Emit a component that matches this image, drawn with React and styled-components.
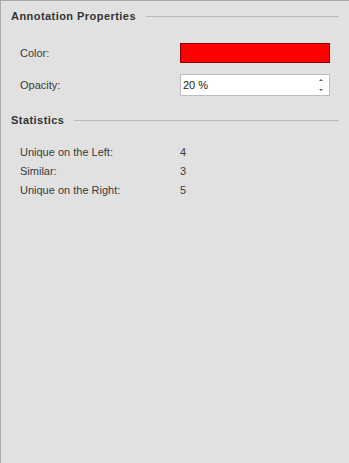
import React from "react";
import styled, { createGlobalStyle } from "styled-components";

const GlobalStyle = createGlobalStyle`
  html, body {
    margin: 0;
    padding: 0;
    background: #e1e1e1;
  }
  #root {
    height: 463px;
  }
`;

const Panel = styled.div`
  box-sizing: border-box;
  width: 349px;
  height: 463px;
  background: #e1e1e1;
  border-top: 1px solid #a9a9a9;
  border-left: 1px solid #a9a9a9;
  font-family: "Liberation Sans", Arial, sans-serif;
  font-size: 11px;
  color: #3b3b3b;
  padding: 7px 10px 0 10px;
`;

const Section = styled.section`
  margin-bottom: ${(p) => p.gap || 0}px;
`;

const Header = styled.div`
  display: flex;
  align-items: center;
  gap: 10px;
  height: 16px;
  font-weight: bold;
  letter-spacing: 0.45px;
  color: #333;
`;

const Rule = styled.div`
  flex: 1;
  height: 1px;
  background: #b9b9b9;
`;

const Rows = styled.div`
  display: flex;
  flex-direction: column;
  padding: ${(p) => p.pad || "0"};
  gap: ${(p) => p.gap || 0}px;
`;

const Row = styled.div`
  display: grid;
  grid-template-columns: 160px 150px;
  align-items: center;
  padding-left: 9px;
  height: ${(p) => p.h || 22}px;
`;

const Swatch = styled.div`
  box-sizing: border-box;
  height: 20px;
  background: #ff0000;
  border: 1px solid #8a0000;
`;

const Spin = styled.div`
  box-sizing: border-box;
  height: 22px;
  background: #fff;
  border: 1px solid #bdbdbd;
  display: flex;
  align-items: center;
  justify-content: space-between;
  padding: 0 6px 0 2px;
  color: #222;
`;

const Arrows = styled.div`
  display: flex;
  flex-direction: column;
  gap: 8px;
  align-items: center;
`;

const Arrow = styled.div`
  width: 0;
  height: 0;
  border-left: 2px solid transparent;
  border-right: 2px solid transparent;
  ${(p) =>
    p.down
      ? "border-top: 2px solid #5a5a6a;"
      : "border-bottom: 2px solid #5a5a6a;"}
`;

export default function App() {
  return (
    <>
      <GlobalStyle />
      <Panel>
        <Section gap={16}>
          <Header>
            <span>Annotation Properties</span>
            <Rule />
          </Header>
          <Rows pad="18px 0 0 0" gap={10}>
            <Row>
              <span>Color:</span>
              <Swatch />
            </Row>
            <Row>
              <span>Opacity:</span>
              <Spin>
                <span>20 %</span>
                <Arrows>
                  <Arrow />
                  <Arrow down />
                </Arrows>
              </Spin>
            </Row>
          </Rows>
        </Section>
        <Section>
          <Header>
            <span>Statistics</span>
            <Rule />
          </Header>
          <Rows pad="14px 0 0 0" gap={0}>
            <Row h={19}>
              <span>Unique on the Left:</span>
              <span>4</span>
            </Row>
            <Row h={19}>
              <span>Similar:</span>
              <span>3</span>
            </Row>
            <Row h={19}>
              <span>Unique on the Right:</span>
              <span>5</span>
            </Row>
          </Rows>
        </Section>
      </Panel>
    </>
  );
}
